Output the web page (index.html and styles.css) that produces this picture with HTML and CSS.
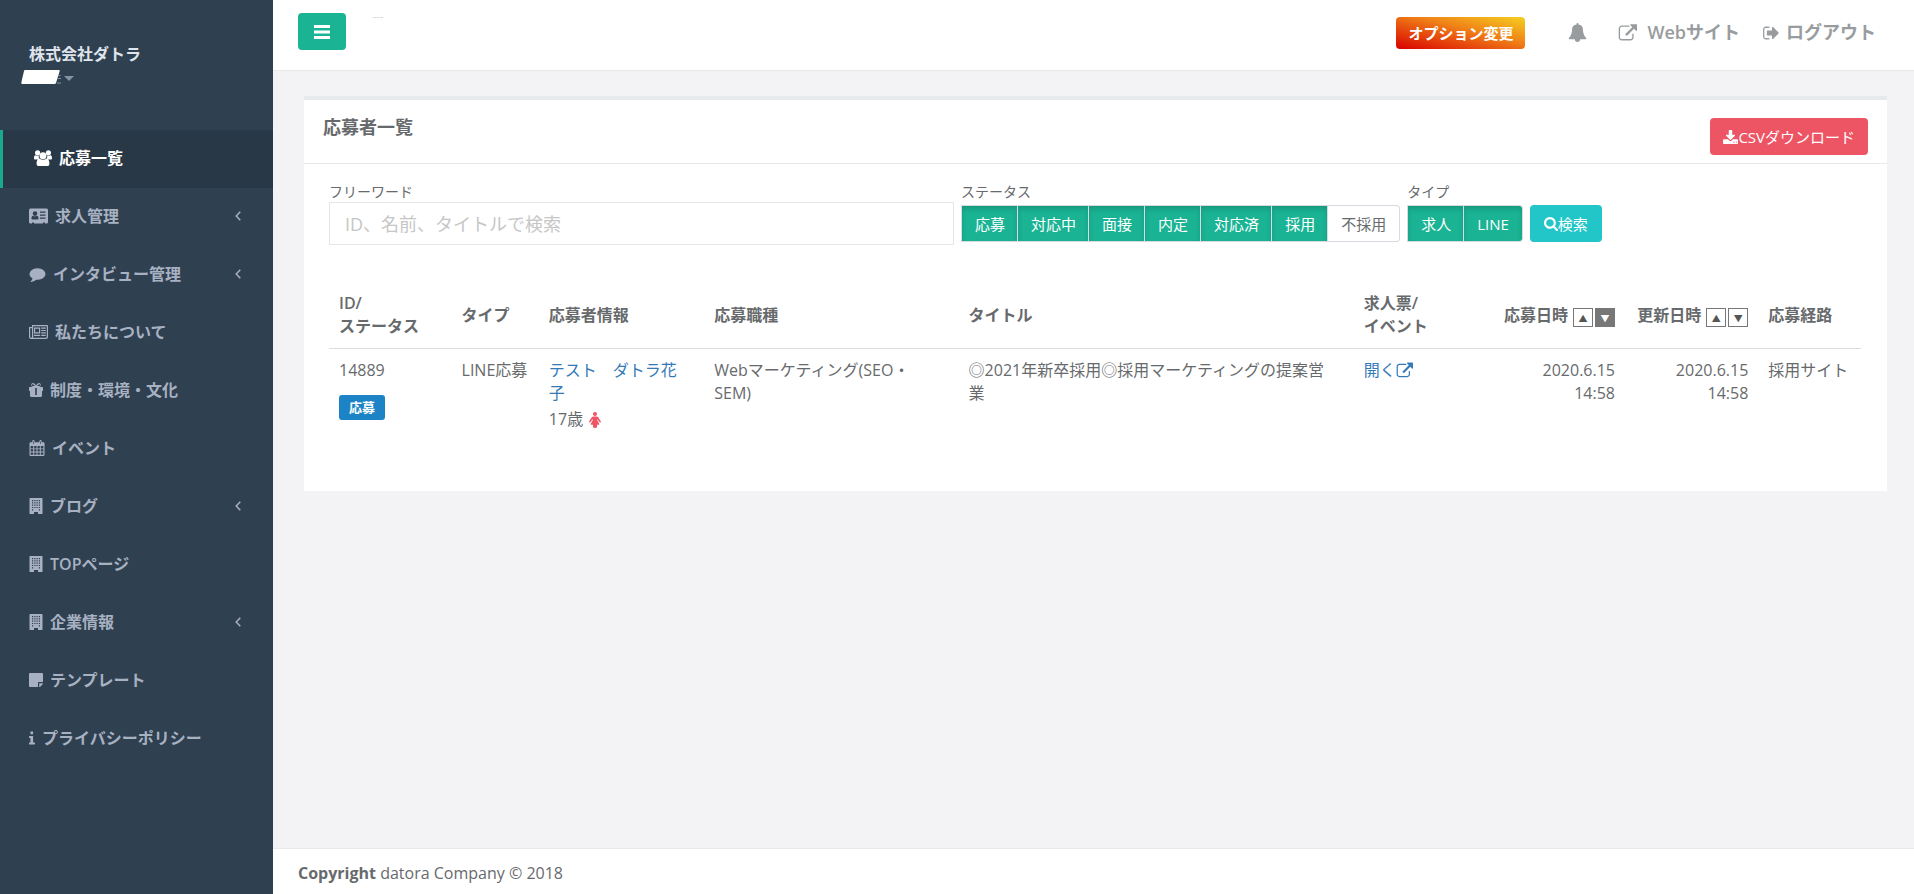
FILE: index.html
```html
<!DOCTYPE html>
<html lang="ja">
<head>
<meta charset="utf-8">
<meta name="viewport" content="width=device-width, initial-scale=1">
<title>応募者一覧</title>
<link rel="stylesheet" href="styles.css">
</head>
<body>
<svg class="sprite" aria-hidden="true">
  <symbol id="i-users" viewBox="0 0 18 16"><circle cx="3.6" cy="2.8" r="2.6"/><circle cx="14.4" cy="2.8" r="2.6"/><path d="M0 8.400C0 6.200.6 5 1.700 5.200c1 .7 2.400.7 3.200.2C4.500 6.700 4.900 8 5.700 9.400H1.400C.5 9.400 0 9.200 0 8.400zM18 8.400c0-2.200-.6-3.400-1.700-3.200-1 .7-2.400.7-3.200.2.4 1.300 0 2.600-.8 4h4.300c.9 0 1.400-.2 1.400-1z"/><circle cx="9" cy="5.700" r="3.500"/><path d="M2.600 13.700c0-2.700.7-5 3-5 1.900 1.500 4.900 1.500 6.800 0 2.300 0 3 2.300 3 5 0 1.500-.9 2.300-2.200 2.300H4.800c-1.300 0-2.200-.8-2.200-2.300z"/></symbol>
  <symbol id="i-card" viewBox="0 0 19 15"><path fill-rule="evenodd" d="M1.500 0h16A1.500 1.500 0 0 1 19 1.500v12a1.500 1.500 0 0 1-1.500 1.500H16v-1h-2v1H5v-1H3v1H1.500A1.500 1.500 0 0 1 0 13.500v-12A1.500 1.500 0 0 1 1.500 0zM2.500 10.200c0 .5.300.8.800.8h5.400c.5 0 .8-.3.800-.8 0-1.600-.4-3-1.700-3-.9.800-2.700.8-3.600 0-1.300 0-1.700 1.400-1.700 3zM6 2.800a2.300 2.300 0 1 0 0 4.600 2.300 2.300 0 0 0 0-4.600zM11 3v1.300h5.500V3zm0 3v1.300h5.500V6zm0 3v1.300h5.500V9z"/></symbol>
  <symbol id="i-comment" viewBox="0 0 1792 1792"><path d="M1792 896q0 174-120 321.500t-326 233-450 85.500q-70 0-145-8-198 175-460 242-49 14-114 22-17 2-30.500-9t-17.500-29v-1q-3-4-.5-12t2-10 4.500-9.500l6-9 7-8.500 8-9q7-8 31-34.500t34.500-38 31-39.500 32.500-51 27-59 26-76q-157-89-247.500-220t-90.500-281q0-174 120-321.500t326-233 450-85.500 450 85.500 326 233 120 321.500z"/></symbol>
  <symbol id="i-news" viewBox="0 0 19 14"><path fill-rule="evenodd" d="M3 0h15a1 1 0 0 1 1 1v11a2 2 0 0 1-2 2H2a2 2 0 0 1-2-2V2h3zm1.200 1.200V12c0 .3 0 .5-.1.800H17a.8.800 0 0 0 .8-.8V1.200zM1.200 3.200V12c0 1 1.800 1 1.800 0V3.200zM5 2.600h6.200v5.800H5zm1.200 1.200v3.400H10V3.800zM12.200 2.600h4.600v1.200h-4.600zm0 2.300h4.600v1.200h-4.600zm0 2.300h4.600v1.200h-4.600zM5 9.700h6.200v1.200H5zm7.200 0h4.600v1.200h-4.600z"/></symbol>
  <symbol id="i-gift" viewBox="0 0 14 14"><path fill-rule="evenodd" d="M.5 4h3.100A2.100 2.100 0 0 1 3.700 0C5 0 5.600.7 7 2.400 8.400.7 9 0 10.300 0a2.100 2.100 0 0 1 .1 4h3.100c.3 0 .5.200.5.500v3c0 .3-.2.500-.5.500H13v4.800c0 .7-.5 1.200-1.200 1.200H2.200C1.500 14 1 13.500 1 12.800V8H.5C.2 8 0 7.800 0 7.500v-3C0 4.200.2 4 .5 4zM3.700 1.200a.9.900 0 0 0 0 1.900h2.200C5 1.900 4.400 1.200 3.700 1.200zM8.100 3.100h2.200a.9.900 0 0 0 0-1.900c-.7 0-1.300.7-2.200 1.900zM6.200 5v7h1.600V5z"/></symbol>
  <symbol id="i-calendar" viewBox="0 0 16 17"><path fill-rule="evenodd" d="M1.200 2.500H3V1.400C3 .6 3.500 0 4.200 0s1.300.6 1.300 1.400v1.100h5V1.400C10.500.6 11.100 0 11.800 0S13 .6 13 1.400v1.100h1.800c.7 0 1.200.5 1.200 1.200v12c0 .7-.5 1.300-1.200 1.300H1.200C.5 17 0 16.400 0 15.700v-12c0-.7.5-1.200 1.200-1.200zM1.200 6.500v2.400H4V6.500zm3.800 0v2.400h2.500V6.500zm3.500 0v2.400H11V6.500zm3.500 0v2.400h2.800V6.500zM1.200 9.800v2.400H4V9.800zm3.800 0v2.400h2.500V9.800zm3.500 0v2.400H11V9.800zm3.500 0v2.400h2.800V9.800zM1.200 13.200v2.600H4v-2.600zm3.800 0v2.600h2.500v-2.600zm3.500 0v2.600H11v-2.600zm3.500 0v2.600h2.800v-2.600zM3.900 1.200v3h.7v-3zm7.500 0v3h.7v-3z"/></symbol>
  <symbol id="i-building" viewBox="0 0 13 16"><path fill-rule="evenodd" d="M.6 0h11.800c.3 0 .6.300.6.600v14.800c0 .3-.3.600-.6.600H8.500v-2h-4v2H.6a.6.600 0 0 1-.6-.6V.6C0 .3.300 0 .6 0zM2.500 2v1.200h1.200V2zm2.300 0v1.200H6V2zM7 2v1.200h1.200V2zm2.300 0v1.200h1.200V2zM2.500 4.300v1.200h1.200V4.300zm2.300 0v1.200H6V4.300zm2.200 0v1.200h1.200V4.300zm2.300 0v1.200h1.200V4.300zM2.500 6.600v1.200h1.200V6.600zm2.300 0v1.200H6V6.600zm2.200 0v1.200h1.200V6.600zm2.300 0v1.200h1.200V6.600zM2.500 8.900v1.200h1.200V8.900zm2.300 0v1.200H6V8.900zm2.200 0v1.200h1.200V8.900zm2.300 0v1.200h1.200V8.900zM2.500 11.200v1.200h1.200v-1.200zm6.800 0v1.200h1.200v-1.200z"/></symbol>
  <symbol id="i-note" viewBox="0 0 14 14"><path d="M.8 0h12.400c.5 0 .8.300.8.800V9h-4.200a.8.800 0 0 0-.8.800V14H.8A.8.800 0 0 1 0 13.200V.8C0 .3.300 0 .8 0zM10.200 10.200H14c-.1.600-.3 1-.6 1.300l-1.900 1.900c-.3.300-.7.500-1.300.6z"/></symbol>
  <symbol id="i-info" viewBox="0 0 6 13"><path d="M1.400 0h2.700v2.800H1.400zM.4 4.500h3.700v6.300c0 .2.100.3.300.3h1.200c.2 0 .4.200.4.400v1c0 .3-.2.500-.4.500H.4c-.2 0-.4-.2-.4-.5v-1c0-.2.200-.4.400-.4h1V6.400h-1C.2 6.400 0 6.200 0 6V5c0-.3.200-.5.400-.5z"/></symbol>
  <symbol id="i-left" viewBox="0 0 6 10"><path d="M5.300.7 1.200 5l4.100 4.300" fill="none" stroke="currentColor" stroke-width="1.500"/></symbol>
  <symbol id="i-bell" viewBox="0 0 1792 1792"><path d="M1728 1408q0 52-38 90t-90 38h-448q0 106-75 181t-181 75-181-75-75-181h-448q-52 0-90-38t-38-90q50-42 91-88t85-119.500 74.500-158.500 50-206 19.500-260q0-152 117-282.500t307-158.500q-8-19-8-39 0-40 28-68t68-28 68 28 28 68q0 20-8 39 190 28 307 158.500t117 282.500q0 139 19.500 260t50 206 74.500 158.500 85 119.500 91 88z"/></symbol>
  <symbol id="i-external" viewBox="0 0 1792 1792"><path d="M1472 989v320q0 119-84.500 203.500t-203.500 84.500h-832q-119 0-203.500-84.500t-84.500-203.500v-832q0-119 84.500-203.500t203.500-84.500h704q14 0 23 9t9 23v64q0 14-9 23t-23 9h-704q-66 0-113 47t-47 113v832q0 66 47 113t113 47h832q66 0 113-47t47-113v-320q0-14 9-23t23-9h64q14 0 23 9t9 23zm320-864v512q0 26-19 45t-45 19-45-19l-176-176-652 652q-10 10-23 10t-23-10l-114-114q-10-10-10-23t10-23l652-652-176-176q-19-19-19-45t19-45 45-19h512q26 0 45 19t19 45z"/></symbol>
  <symbol id="i-out" viewBox="60 128 1600 1536"><path d="M704 1440q0 4 1 20t.5 26.500-3 23.500-10 19.500-20.500 6.500h-320q-119 0-203.500-84.500t-84.500-203.500v-704q0-119 84.500-203.500t203.500-84.500h320q13 0 22.500 9.500t9.500 22.500q0 4 1 20t.5 26.500-3 23.500-10 19.500-20.500 6.500h-320q-66 0-113 47t-47 113v704q0 66 47 113t113 47h312l11.500 1 11.500 3 8 5.500 7 9 2 13.500zm928-544q0 26-19 45l-544 544q-19 19-45 19t-45-19-19-45v-288h-448q-26 0-45-19t-19-45v-384q0-26 19-45t45-19h448v-288q0-26 19-45t45-19 45 19l544 544q19 19 19 45z"/></symbol>
  <symbol id="i-download" viewBox="64 0 1664 1536"><path d="M1344 1344q0-26-19-45t-45-19-45 19-19 45 19 45 45 19 45-19 19-45zm256 0q0-26-19-45t-45-19-45 19-19 45 19 45 45 19 45-19 19-45zm128-224v320q0 40-28 68t-68 28h-1472q-40 0-68-28t-28-68v-320q0-40 28-68t68-28h465l135 136q58 56 136 56t136-56l136-136h464q40 0 68 28t28 68zm-325-569q17 41-14 70l-448 448q-18 19-45 19t-45-19l-448-448q-31-29-14-70 17-39 59-39h256v-448q0-26 19-45t45-19h256q26 0 45 19t19 45v448h256q42 0 59 39z"/></symbol>
  <symbol id="i-search" viewBox="64 128 1664 1664"><path d="M1216 832q0-185-131.500-316.500t-316.500-131.500-316.500 131.500-131.500 316.500 131.500 316.500 316.500 131.500 316.500-131.500 131.500-316.500zm512 832q0 52-38 90t-90 38q-54 0-90-38l-343-342q-179 124-399 124-143 0-273.500-55.500t-225-150-150-225-55.500-273.500 55.500-273.500 150-225 225-150 273.500-55.500 273.500 55.500 225 150 150 225 55.500 273.500q0 220-124 399l343 343q37 37 37 90z"/></symbol>
  <symbol id="i-female" viewBox="0 0 12 16"><circle cx="6" cy="2" r="2"/><path d="M4.400 4.500h3.200c.7 0 1.200.3 1.600.8l2.600 3.900c.5.900-.7 1.700-1.400.9L8.200 6.900v1.200l2.100 3.800c.2.400 0 .8-.4.800H8v2.300c0 1.200-4 1.200-4 0v-2.300H2.100c-.4 0-.6-.4-.4-.8l2.100-3.800V6.900l-2.200 3.200c-.7.800-1.900 0-1.400-.9l2.600-3.900c.4-.5.900-.8 1.600-.8z"/></symbol>
</svg>
<div class="layout">
  <aside class="sidebar">
    <div class="profile">
      <strong class="profile-name">株式会社ダトラ</strong>
      <svg class="profile-user" viewBox="0 0 54 14" role="img" aria-label="アカウント"><path fill="#fff" d="M4 0h34q1 0 .7 1L35 13q-.3 1-1.500 1H1.500Q0 14 .3 12.500L3 1q.3-1 1-1z"/><path d="M37 5.500h2.500M36.500 8.500h3.500M36 13h4" stroke="#8095a8" fill="none"/><path fill="#8095a8" d="M43 6h10l-5 5z"/></svg>
    </div>
    <nav>
      <ul class="menu">
        <li><a class="menu-link active" href="#"><svg class="ico w18"><use href="#i-users"/></svg>応募一覧</a></li>
        <li><a class="menu-link" href="#"><svg class="ico w19"><use href="#i-card"/></svg>求人管理<svg class="arrow"><use href="#i-left"/></svg></a></li>
        <li><a class="menu-link" href="#"><svg class="ico w17"><use href="#i-comment"/></svg>インタビュー管理<svg class="arrow"><use href="#i-left"/></svg></a></li>
        <li><a class="menu-link" href="#"><svg class="ico w19"><use href="#i-news"/></svg>私たちについて</a></li>
        <li><a class="menu-link" href="#"><svg class="ico w14"><use href="#i-gift"/></svg>制度・環境・文化</a></li>
        <li><a class="menu-link" href="#"><svg class="ico w16"><use href="#i-calendar"/></svg>イベント</a></li>
        <li><a class="menu-link" href="#"><svg class="ico w14"><use href="#i-building"/></svg>ブログ<svg class="arrow"><use href="#i-left"/></svg></a></li>
        <li><a class="menu-link" href="#"><svg class="ico w14"><use href="#i-building"/></svg>TOPページ</a></li>
        <li><a class="menu-link" href="#"><svg class="ico w14"><use href="#i-building"/></svg>企業情報<svg class="arrow"><use href="#i-left"/></svg></a></li>
        <li><a class="menu-link" href="#"><svg class="ico w14"><use href="#i-note"/></svg>テンプレート</a></li>
        <li><a class="menu-link" href="#"><svg class="ico w6"><use href="#i-info"/></svg>プライバシーポリシー</a></li>
      </ul>
    </nav>
  </aside>
  <div class="page">
    <header class="topbar">
      <button class="toggle" type="button" aria-label="メニュー"><svg width="16" height="14" viewBox="0 0 16 14"><path d="M0 0h16v3H0zM0 5.500h16v3H0zM0 11h16v3H0z"/></svg></button>
      <span class="trace"></span>
      <div class="topnav">
        <button class="option" type="button">オプション変更</button>
        <a class="bell" href="#" aria-label="通知"><svg width="19" height="19"><use href="#i-bell"/></svg></a>
        <a class="toplink site" href="#"><svg width="19" height="20"><use href="#i-external"/></svg>Webサイト</a>
        <a class="toplink logout" href="#"><svg width="16" height="16"><use href="#i-out"/></svg>ログアウト</a>
      </div>
    </header>
    <main class="content">
      <section class="card">
        <div class="card-head">
          <h1>応募者一覧</h1>
          <button class="btn csv" type="button"><svg width="15" height="14"><use href="#i-download"/></svg>CSVダウンロード</button>
        </div>
        <div class="card-body">
          <form class="filters">
            <div class="field keyword">
              <label for="kw">フリーワード</label>
              <input id="kw" class="text" type="text" placeholder="ID、名前、タイトルで検索">
            </div>
            <fieldset class="field">
              <legend>ステータス</legend>
              <div class="group">
                <label class="chip"><input type="checkbox" checked>応募</label>
                <label class="chip"><input type="checkbox" checked>対応中</label>
                <label class="chip"><input type="checkbox" checked>面接</label>
                <label class="chip"><input type="checkbox" checked>内定</label>
                <label class="chip"><input type="checkbox" checked>対応済</label>
                <label class="chip"><input type="checkbox" checked>採用</label>
                <label class="chip"><input type="checkbox">不採用</label>
              </div>
            </fieldset>
            <fieldset class="field">
              <legend>タイプ</legend>
              <div class="group">
                <label class="chip"><input type="checkbox" checked>求人</label>
                <label class="chip"><input type="checkbox" checked>LINE</label>
              </div>
            </fieldset>
            <button class="btn search" type="button"><svg width="14" height="14"><use href="#i-search"/></svg>検索</button>
          </form>
          <table class="list">
            <colgroup><col class="c-id"><col class="c-type"><col class="c-person"><col class="c-job"><col class="c-title"><col class="c-open"><col class="c-date"><col class="c-date"><col></colgroup>
            <thead>
              <tr>
                <th>ID/<br>ステータス</th><th>タイプ</th><th>応募者情報</th><th>応募職種</th><th>タイトル</th><th>求人票/<br>イベント</th>
                <th class="date"><span class="sort">応募日時<span class="sort-btns"><button type="button">▲</button><button class="on" type="button">▼</button></span></span></th>
                <th class="date"><span class="sort">更新日時<span class="sort-btns"><button type="button">▲</button><button type="button">▼</button></span></span></th>
                <th>応募経路</th>
              </tr>
            </thead>
            <tbody>
              <tr>
                <td>14889<br><span class="badge">応募</span></td>
                <td>LINE応募</td>
                <td class="wrap"><a href="#">テスト　ダトラ花子</a><div class="age">17歳<svg width="12" height="16"><use href="#i-female"/></svg></div></td>
                <td class="wrap">Webマーケティング(SEO・SEM)</td>
                <td class="wrap">◎2021年新卒採用◎採用マーケティングの提案営業</td>
                <td><a class="open" href="#">開く<svg width="17" height="17"><use href="#i-external"/></svg></a></td>
                <td class="date">2020.6.15<br>14:58</td>
                <td class="date">2020.6.15<br>14:58</td>
                <td>採用サイト</td>
              </tr>
            </tbody>
          </table>
        </div>
      </section>
    </main>
    <footer class="footer"><strong>Copyright</strong> datora Company © 2018</footer>
  </div>
</div>
</body>
</html>
```

FILE: styles.css
```css
* { box-sizing: border-box; }
body {
  margin: 0;
  font-family: "Open Sans", "Noto Sans CJK JP", sans-serif;
  font-size: 16px;
  line-height: 23px;
  color: #676a6c;
  background: #2f4050;
}
a { color: #337ab7; text-decoration: none; }
svg { fill: currentColor; flex: none; }
button, input { font-family: inherit; }
button { cursor: pointer; }
.sprite { display: none; }
.layout { display: flex; min-height: 100vh; }

.sidebar { flex: 0 0 273px; background: #2f4050; }
.profile { display: flex; flex-direction: column; height: 130px; padding: 43px 21px 0; }
.profile-name { padding-left: 8px; color: #dfe4ed; }
.profile-user { width: 54px; height: 14px; margin-top: 4px; }
.menu { list-style: none; margin: 0; padding: 0; }
.menu-link {
  display: flex;
  align-items: center;
  gap: 7px;
  height: 58px;
  padding: 0 32px 2px 29px;
  color: #a7b1c2;
  font-weight: 600;
}
.menu-link.active { padding-left: 31px; border-left: 3px solid #19aa8d; background: #293846; color: #fff; }
.ico { height: 16px; }
.w19 { width: 19px; }
.w18 { width: 18px; }
.w17 { width: 17px; }
.w16 { width: 16px; }
.w14 { width: 14px; }
.w6 { width: 6px; }
.arrow { width: 6px; height: 10px; margin-left: auto; }

.page { flex: 1; min-width: 0; display: flex; flex-direction: column; background: #f3f3f5; }
.topbar {
  display: flex;
  align-items: flex-start;
  height: 71px;
  padding: 13px 38px 0 25px;
  background: #fff;
  border-bottom: 1px solid #e7eaec;
}
.toggle {
  display: flex;
  align-items: center;
  justify-content: center;
  width: 48px;
  height: 37px;
  padding: 0;
  border: 0;
  border-radius: 4px;
  background: #1ab394;
  color: #fff;
}
.trace { width: 10px; margin: 4px 0 0 27px; border-top: 1px dashed #ddd; }
.topnav { display: flex; align-items: center; margin-left: auto; height: 39px; color: #999c9e; }
.option {
  height: 32px;
  padding: 0 12px;
  border: 0;
  border-radius: 4px;
  background: linear-gradient(to top right, #d90000, #f08418 60%, #f5d020);
  color: #fff;
  font-size: 15px;
  font-weight: 700;
}
.bell { display: flex; margin-left: 43px; color: #999c9e; }
.toplink { display: flex; align-items: center; font-size: 18px; font-weight: 600; color: #999c9e; }
.site { gap: 10px; margin-left: 31px; }
.logout { gap: 7px; margin-left: 23px; }

.content { flex: 1; padding: 25px 27px 40px 31px; }
.card { background: #fff; border-top: 4px solid #e7eaec; }
.card-head {
  display: flex;
  justify-content: space-between;
  align-items: flex-start;
  height: 64px;
  padding: 16px 19px 0;
  border-bottom: 1px solid #e7eaec;
}
h1 { margin: 0; font-size: 18px; line-height: 23px; font-weight: 600; }
.btn {
  display: flex;
  align-items: center;
  height: 37px;
  padding: 0 13px;
  border: 0;
  border-radius: 4px;
  color: #fff;
  font-size: 15px;
}
.csv { margin-top: 2px; background: #ed5565; }
.search { background: #23c6c8; padding: 0 14px; margin-bottom: 3px; }
.card-body { padding: 18px 26px 50px 25px; }
.filters { display: flex; align-items: flex-end; gap: 7px; }
.field { margin: 0; padding: 0 0 3px; border: 0; font-size: 14px; line-height: 20px; min-width: 0; }
.field legend { padding: 0; margin-bottom: 3px; }
.keyword { flex: 0 0 40.8%; padding: 0; }
.keyword label { display: block; }
.text {
  display: block;
  width: 100%;
  height: 43px;
  padding: 0 15px;
  border: 1px solid #e5e6e7;
  font-size: 18px;
  color: #676a6c;
}
.text::placeholder { color: #c6c6c6; }
.group { display: flex; }
.chip {
  display: flex;
  align-items: center;
  height: 37px;
  padding: 0 12px 0 13px;
  border: 1px solid #d5dbe0;
  border-left-width: 0;
  font-size: 15px;
}
.chip:first-child { border-left-width: 1px; }
.chip:last-child { border-radius: 0 4px 4px 0; padding-right: 13px; }
.chip input { position: absolute; opacity: 0; width: 1px; height: 1px; margin: 0; }
.chip:has(input:checked) { background: #1ab394; color: #fff; box-shadow: inset 0 3px 5px rgba(0, 0, 0, .15); }

.list { width: 100%; margin-top: 37px; border-collapse: collapse; table-layout: fixed; }
.list th, .list td { padding: 10px; text-align: left; }
.list th { border-bottom: 1px solid #ddd; font-weight: 600; vertical-align: middle; }
.list td { vertical-align: top; }
.list .wrap { padding-right: 16px; }
.list .date { text-align: right; }
.c-id { width: 8%; }
.c-type { width: 5.7%; }
.c-person { width: 10.8%; }
.c-job { width: 16.6%; }
.c-title { width: 25.8%; }
.c-open { width: 9%; }
.c-date { width: 8.7%; }
.sort { display: inline-flex; gap: 5px; white-space: nowrap; }
.sort-btns { display: flex; gap: 2px; padding-top: 4px; }
.sort-btns button {
  width: 20px;
  height: 19px;
  padding: 2px 0 0;
  border: 1px solid #777;
  background: #fff;
  color: #555;
  font-size: 9px;
  line-height: 15px;
}
.sort-btns .on { background: #777; color: #fff; }
.badge {
  display: inline-block;
  margin-top: 13px;
  padding: 0 10px;
  border-radius: 3px;
  background: #1c84c6;
  color: #fff;
  font-size: 13px;
  line-height: 25px;
  font-weight: 700;
}
.age { display: flex; align-items: center; gap: 6px; margin-top: 3px; }
.age svg { color: #ed5565; }
.open { display: inline-flex; align-items: center; }

.footer { padding: 13px 25px 9px; background: #fff; border-top: 1px solid #e7eaec; }
```
